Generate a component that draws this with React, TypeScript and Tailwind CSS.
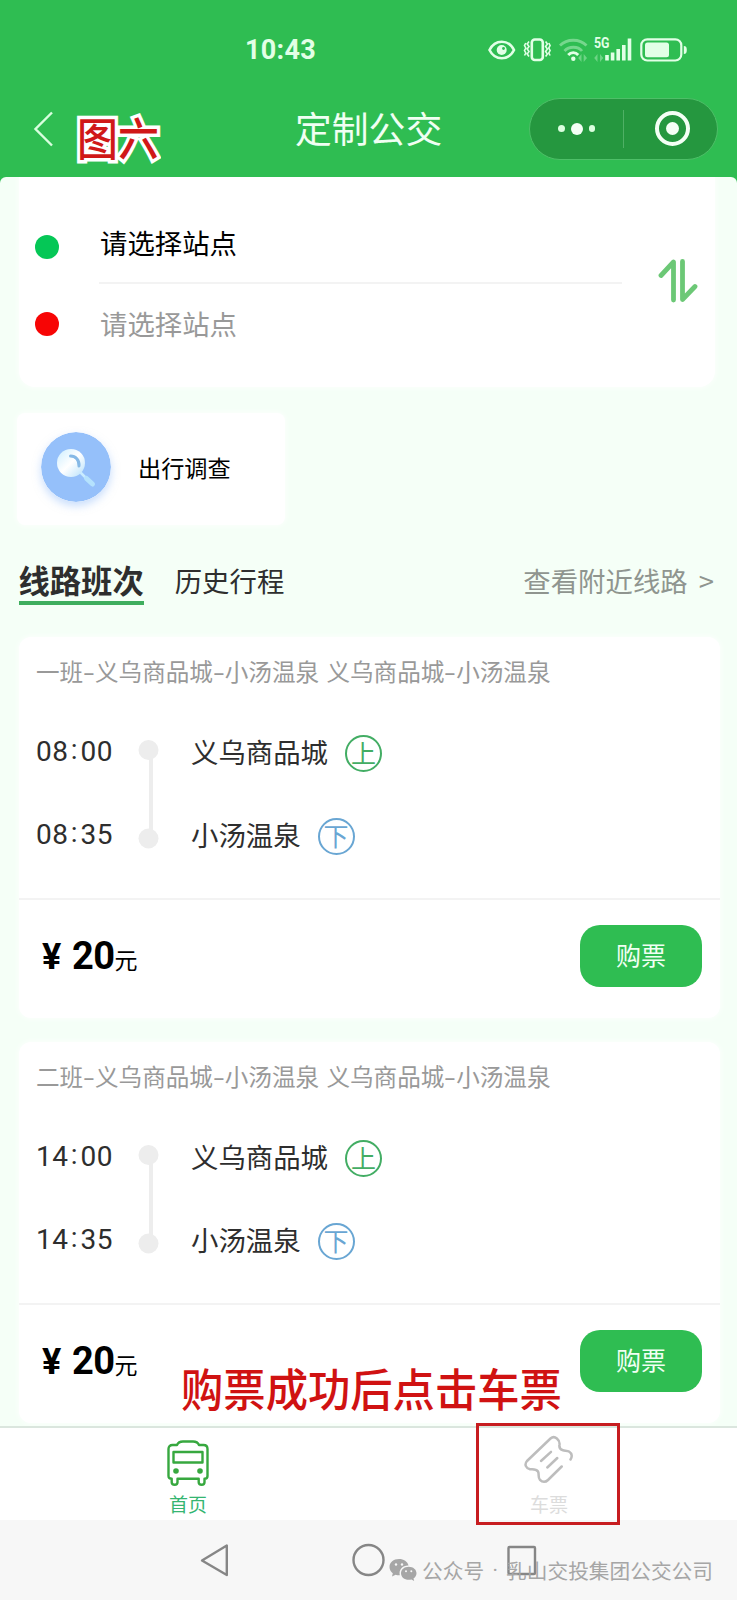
import * as React from 'react';

type Trip = {
  id: string;
  title: string;
  departTime: string;
  arriveTime: string;
  from: string;
  to: string;
  price: number;
};

const trips: Trip[] = [
  {
    id: 'trip-1',
    title: '一班-义乌商品城-小汤温泉 义乌商品城-小汤温泉',
    departTime: '08:00',
    arriveTime: '08:35',
    from: '义乌商品城',
    to: '小汤温泉',
    price: 20,
  },
  {
    id: 'trip-2',
    title: '二班-义乌商品城-小汤温泉 义乌商品城-小汤温泉',
    departTime: '14:00',
    arriveTime: '14:35',
    from: '义乌商品城',
    to: '小汤温泉',
    price: 20,
  },
];

function StatusIcons() {
  return (
    <svg width="202" height="28" viewBox="0 0 202 28" fill="none" stroke="#e2ffe6">
      {/* eye */}
      <path d="M2.500 14C8 3 21.500 3 27 14C21.500 25 8 25 2.500 14Z" strokeWidth="2.600" />
      <circle cx="14.700" cy="14" r="5" fill="#e2ffe6" stroke="none" />
      <circle cx="16.500" cy="12.500" r="1.400" fill="#2fbd52" stroke="none" />
      {/* vibrate */}
      <rect x="44.800" y="3.500" width="11" height="20.500" rx="3" strokeWidth="2.600" />
      <path d="M42 5.500l-1.800 2.500 1.800 2.500-1.800 2.500 1.800 2.500-1.800 2.500 1.800 2.500M38.800 7l-1.300 2.500 1.300 2.500-1.300 2.500 1.300 2.500-1.300 2.500M58.600 5.500l1.800 2.500-1.800 2.500 1.800 2.500-1.800 2.500 1.800 2.500-1.800 2.500M61.800 7l1.300 2.500-1.300 2.500 1.300 2.500-1.300 2.500 1.300 2.500" strokeWidth="1.600" />
      {/* wifi */}
      <g strokeWidth="2.800">
        <path d="M73 9.500C80 2.500 92.500 2.500 99.500 9.500" opacity=".4" />
        <path d="M77.500 15C82 10 91 10 95 15" opacity=".4" />
        <path d="M81.200 19C84 15.800 88.500 15.800 91.200 19" />
      </g>
      <circle cx="86.300" cy="22.800" r="2.200" fill="#e2ffe6" stroke="none" />
      <path d="M94.500 18l-3.300 4 3.300 4zM96.700 18l3.300 4-3.300 4z" fill="#e2ffe6" stroke="none" opacity=".35" />
      {/* signal */}
      <path d="M110.500 18l-3.300 4 3.300 4zM113 18l3.300 4-3.300 4z" fill="#e2ffe6" stroke="none" opacity=".35" />
      <path d="M120 19v5.500M125.600 16.500v8M131.200 13v11.500M136.800 9v15.500M142.500 2.500v22" strokeWidth="3.600" />
      <text x="107" y="12.300" fontSize="14" fontWeight="700" fill="#e2ffe6" stroke="none" fontFamily="Roboto, sans-serif" textLength="15.500" lengthAdjust="spacingAndGlyphs">5G</text>
      {/* battery */}
      <rect x="154.300" y="3.300" width="40" height="21.200" rx="6" strokeWidth="2.200" />
      <rect x="158" y="6.500" width="24" height="14.800" rx="2.500" fill="#e2ffe6" stroke="none" />
      <path d="M196.800 10c2.300 0 3 1.500 3 4s-.7 4-3 4z" fill="#e2ffe6" stroke="none" />
    </svg>
  );
}

function SwapIcon() {
  return (
    <svg width="40" height="46" viewBox="0 0 40 46" fill="none" stroke="#6cc876" strokeWidth="4.800" strokeLinecap="round" strokeLinejoin="round">
      <path d="M3 17.500L15.500 4V42" />
      <path d="M24.500 3.500V41.500L37 28.500" />
    </svg>
  );
}

function SurveyIcon() {
  return (
    <svg width="70" height="70" viewBox="0 0 70 70" fill="none" className="-mt-[5px] rounded-full shadow-[0_4px_8px_rgba(147,190,250,0.5)]">
      <defs>
        <linearGradient id="lens" x1="0" y1="0" x2="1" y2="1">
          <stop offset="0" stopColor="#cdeeff" />
          <stop offset=".5" stopColor="#ffffff" />
          <stop offset="1" stopColor="#b4e0fb" />
        </linearGradient>
      </defs>
      <circle cx="35" cy="35" r="35" fill="#95c0fa" />
      <path d="M39.500 40.500L45 46" stroke="#c9ecff" strokeWidth="2.500" />
      <path d="M45.500 46.500L51.500 52" stroke="#b5e2fd" strokeWidth="5" strokeLinecap="round" />
      <circle cx="30" cy="31" r="14" fill="url(#lens)" />
      <path d="M29.500 24C34.500 24 38.500 28 38 34" stroke="#86b9e6" strokeWidth="3" strokeLinecap="round" />
    </svg>
  );
}

function BusIcon() {
  return (
    <svg width="42" height="46" viewBox="0 0 42 46" fill="none" stroke="#37a83f" strokeWidth="2.400" strokeLinejoin="round">
      <path d="M10 5C11 2.500 13 1.500 16 1.500h10c3 0 5 1 6 3.500h4.500c2.500 0 4 1.500 4 4V36c0 1.800-1 2.700-3 2.700v3.500c0 1.500-1 2.500-2.800 2.500s-3-1-3-2.500V38.700H10.500v3.500c0 1.500-1 2.500-2.800 2.500s-3-1-3-2.500v-3.500c-2.200 0-3.200-1-3.200-2.700V9c0-2.500 1.500-4 4-4z" />
      <rect x="6.500" y="12" width="29" height="10.500" />
      <circle cx="9" cy="31" r="2.800" fill="#37a83f" stroke="none" />
      <circle cx="33" cy="31" r="2.800" fill="#37a83f" stroke="none" />
    </svg>
  );
}

function TicketIcon() {
  return (
    <svg width="50" height="50" viewBox="0 0 50 50" fill="none" stroke="#bdbdbd" strokeWidth="2.500" strokeLinecap="round" strokeLinejoin="round">
      <path d="M46.500 24.500C48.500 21.500 48 18.500 45 16.500C43.500 15.500 41 15.800 39 15.300C35.500 14.500 35 12.500 35.500 9.500C36 5.500 31 -.5 26.500 3.500L3 26C0 29.500 2 33.500 6 34.200C8.500 34.500 12 33.500 14 36.500C15.500 39 13.500 42 16 44.800C18.500 47.500 21.500 47.500 24 45L37.700 31.500" />
      <path d="M17 26L27 16.800M23.300 32.500L33.300 23" />
    </svg>
  );
}

function WechatIcon() {
  return (
    <svg width="28" height="24" viewBox="0 0 28 24">
      <path fill="#a6a6a6" d="M10 1C4.500 1 .5 4.500.5 9c0 2.500 1.200 4.700 3.300 6.200L3 18.500l3.600-1.800c1.500.4 2.700.6 4.200.5C9.500 11.500 14 7.200 19.500 7.500C18.500 3.500 14.700 1 10 1Z" />
      <path fill="#a6a6a6" d="M19.700 8.700c-4.500 0-7.700 2.900-7.700 6.500s3.200 6.600 7.700 6.600c1 0 1.900-.1 2.800-.4l2.700 1.500-.7-2.500c1.800-1.300 3-3 3-5.200 0-3.600-3.300-6.500-7.800-6.500Z" />
      <g fill="#f7f7f7">
        <circle cx="7" cy="6.500" r="1.200" />
        <circle cx="13" cy="6.500" r="1.200" />
        <circle cx="17" cy="13.200" r="1" />
        <circle cx="22.300" cy="13.200" r="1" />
      </g>
    </svg>
  );
}

function Header() {
  return (
    <header className="h-[177px] bg-[#2fbd52] text-[#f0fff2]">
      <div className="flex h-[98px] items-center pl-[245px] pt-[2px]">
        <span className="w-[242px] pt-[1px] font-[Roboto] text-[27px] font-bold leading-none tracking-[0.300px] text-[#e2ffe6]">10:43</span>
        <StatusIcons />
      </div>
      <div className="flex h-[61px] items-center pl-[33px]">
        <svg width="20" height="36" viewBox="0 0 20 36" fill="none" stroke="#d9ffdf" strokeWidth="2.400">
          <path d="M19 1.500L2.500 18L19 34.500" />
        </svg>
        <span className="ml-[24px] mt-4 w-[91px] origin-left scale-x-[0.91] whitespace-nowrap text-[45px] font-medium leading-none text-[#d01818] [-webkit-text-stroke:7px_white] [paint-order:stroke_fill]">图六</span>
        <h1 className="-mt-[2px] ml-[127px] w-[234px] text-[36.800px] leading-none">定制公交</h1>
        <div className="flex h-[62px] w-[189px] items-center rounded-full border border-[#4ebf68] bg-[#25973f]">
          <div className="flex w-[93px] items-center justify-center gap-[6px]">
            <i className="size-[6.500px] rounded-full bg-[#dcffe0]" />
            <i className="size-3 rounded-full bg-[#f4fff5]" />
            <i className="size-[6.500px] rounded-full bg-[#dcffe0]" />
          </div>
          <div className="h-[38px] w-px bg-[#4fb065]" />
          <div className="flex flex-1 items-center justify-center pl-[4px]">
            <div className="flex size-[35px] items-center justify-center rounded-full border-4 border-[#f4fff5]">
              <i className="size-[13px] rounded-full bg-[#f4fff5]" />
            </div>
          </div>
        </div>
      </div>
    </header>
  );
}

function StopPicker() {
  return (
    <section className="ml-[19px] flex h-[210px] w-[696px] rounded-b-2xl bg-white shadow-[0_0_6px_#fff]">
      <div className="flex w-[80px] flex-col pl-4 pt-[58px]">
        <i className="size-6 rounded-full bg-[#05c756]" />
        <i className="mt-[53px] size-6 rounded-full bg-[#f70505]" />
      </div>
      <div className="w-[523px] pt-[26px] text-[27.400px] leading-none">
        <div className="flex h-[81px] items-center border-b-2 border-[#f3f3f3] pl-[1px] text-black">请选择站点</div>
        <div className="flex h-[80px] items-center pl-[1px] text-[#999]">请选择站点</div>
      </div>
      <div className="pl-[36px] pt-[81px]">
        <SwapIcon />
      </div>
    </section>
  );
}

// The dashes in route names are drawn wider than the font's own hyphen
function RouteTitle({ title }: { title: string }) {
  const parts = title.split('-');
  return (
    <h2 className="flex h-[70px] items-center whitespace-pre pl-[17px] text-[23.600px] leading-none text-[#999] [word-spacing:2px]">
      {parts.map((part, i) => (
        <React.Fragment key={i}>
          {i > 0 && <span className="w-[11.800px] scale-x-[1.5] text-center">-</span>}
          {part}
        </React.Fragment>
      ))}
    </h2>
  );
}

function StopRow({ time, name, type }: { time: string; name: string; type: '上' | '下' }) {
  const [hour, minute] = time.split(':');
  return (
    <div className="flex h-[83px] items-center text-[27.400px] leading-none text-[#2e2e2e]">
      <span className="flex w-[155px] pt-[1px] font-[Roboto] text-[28px] tracking-[0.500px]">
        {hour}
        <span className="-mt-[2px] w-[12px] text-center">:</span>
        {minute}
      </span>
      <span>{name}</span>
      <span
        className={`ml-[17px] mt-[4px] flex size-[37px] items-center justify-center rounded-full border-2 pb-[2px] text-[25px] ${
          type === '上' ? 'border-[#43ad64] text-[#43ad64]' : 'border-[#69a6d3] text-[#69a6d3]'
        }`}
      >
        {type}
      </span>
    </div>
  );
}

function TripCard({ trip }: { trip: Trip }) {
  return (
    <article className="mb-6 ml-[19px] h-[381px] w-[701px] rounded-xl bg-white shadow-[0_0_6px_#fff]">
      <RouteTitle title={trip.title} />
      <div className="relative h-[193px] border-b-2 border-[#f3f3f3] pl-[17px] pt-[3px]">
        <StopRow time={trip.departTime} name={trip.from} type="上" />
        <StopRow time={trip.arriveTime} name={trip.to} type="下" />
        <svg className="absolute left-[119px] top-[33px]" width="21" height="110" viewBox="0 0 21 110" fill="#ededed">
          <circle cx="10.500" cy="10" r="10" />
          <rect x="11" y="10" width="4" height="88" />
          <circle cx="10.500" cy="98.500" r="10" />
        </svg>
      </div>
      <div className="flex h-[112px] items-center justify-between pl-[23px] pr-[18px]">
        <div className="flex items-baseline leading-none text-black">
          <span className="w-[30px] font-[Roboto] text-[36px] font-bold">¥</span>
          <span className="font-[Roboto] text-[38px] font-bold tracking-[-0.500px]">{trip.price}</span>
          <span className="text-[23px]">元</span>
        </div>
        <button className="h-[62px] w-[122px] rounded-[20px] bg-[#2fbd52] pb-[3px] text-[25px] leading-none text-[#f0fff2]">购票</button>
      </div>
    </article>
  );
}

function TabBar() {
  return (
    <nav className="relative z-10 flex h-[94px] border-t-2 border-[#dbe6de] bg-white text-[19px] leading-none">
      <div className="flex w-[376px] flex-col items-center pt-[12px] text-[#35b571]">
        <BusIcon />
        <span className="mt-[8px]">首页</span>
      </div>
      <div className="flex flex-1 flex-col items-center pr-[15px] pt-[7px] text-[#dcdcdc]">
        <TicketIcon />
        <span className="mt-[9px]">车票</span>
      </div>
      <div className="absolute left-[476px] top-[-5px] h-[102px] w-[144px] border-[3.500px] border-[#c71d20]" />
      <p className="absolute left-[181px] top-[-63px] origin-left scale-x-[0.93] whitespace-nowrap text-[45.500px] font-medium text-[#d01212]">购票成功后点击车票</p>
    </nav>
  );
}

function SystemNav() {
  return (
    <footer className="relative h-[80px] bg-[#f7f7f7]">
      <svg width="737" height="80" viewBox="0 0 737 80" fill="none" stroke="#868686" strokeWidth="2.400" strokeLinejoin="round">
        <path d="M202 40.500L226.800 25.500V55Z" />
        <circle cx="368.500" cy="40" r="15" />
        <rect x="508.500" y="27" width="26.500" height="27" rx="1" />
      </svg>
      <div className="absolute left-[389px] top-[38px] flex h-[24px] items-center whitespace-nowrap text-[20.700px] leading-none text-[#a6a6a6]">
        <WechatIcon />
        <span className="ml-[5px]">公众号</span>
        <span className="w-[22px] text-center font-[Roboto]">·</span>
        <span>乳山交投集团公交公司</span>
      </div>
    </footer>
  );
}

export default function App() {
  return (
    <div className="flex h-[1600px] w-[737px] flex-col overflow-hidden bg-[#2fbd52] font-['Noto_Sans_CJK_SC',sans-serif]">
      <Header />
      <main className="h-[1249px] shrink-0 overflow-hidden rounded-t-md bg-[#f5fff7]">
        <StopPicker />
        <section className="ml-[17px] mt-[26px] flex h-[112px] w-[268px] items-center rounded-lg bg-white pl-[24px] shadow-[0_0_6px_#fff]">
          <SurveyIcon />
          <span className="-mt-[2px] ml-[27px] text-[23.200px] leading-none text-black">出行调查</span>
        </section>
        <div className="mt-[37px] flex h-[75px] items-start pl-[18.500px] text-[27.400px] leading-none text-[#2e2e2e]">
          <span className="h-[43px] border-b-4 border-[#3fae5e] text-[31.300px] font-bold leading-[35px]">线路班次</span>
          <span className="ml-[31px] leading-[37px]">历史行程</span>
          <span className="ml-auto pr-[23px] leading-[37px] text-[#8f958f] [word-spacing:5px]">查看附近线路 &gt;</span>
        </div>
        {trips.map((trip) => (
          <TripCard key={trip.id} trip={trip} />
        ))}
      </main>
      <TabBar />
      <SystemNav />
    </div>
  );
}
